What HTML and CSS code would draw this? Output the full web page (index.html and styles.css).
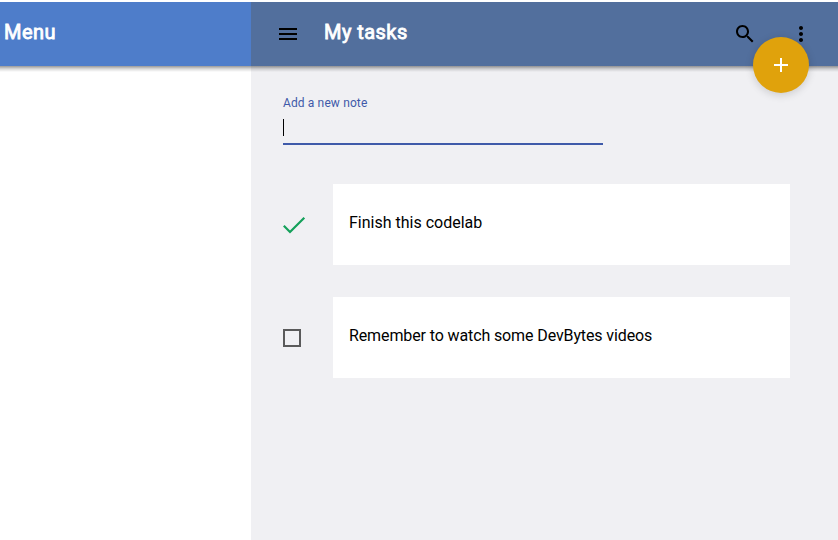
FILE: index.html
```html
<!DOCTYPE html>
<html lang="en">
<head>
<meta charset="utf-8">
<title>My tasks</title>
<link rel="stylesheet" href="styles.css">
</head>
<body>
<div class="app">
  <aside class="drawer">
    <header class="bar bar-drawer"><h1 class="title">Menu</h1></header>
  </aside>
  <main class="main">
    <header class="bar bar-main">
      <svg class="icon" viewBox="0 0 24 24"><path d="M3 18h18v-2H3v2zm0-5h18v-2H3v2zm0-7v2h18V6H3z"/></svg>
      <h1 class="title title-main">My tasks</h1>
      <svg class="icon" viewBox="0 0 24 24"><path d="M15.5 14h-.79l-.28-.27C15.41 12.59 16 11.11 16 9.5 16 5.91 13.09 3 9.5 3S3 5.91 3 9.5 5.91 16 9.5 16c1.61 0 3.09-.59 4.23-1.57l.27.28v.79l5 4.99L20.49 19l-4.99-5zm-6 0C7.01 14 5 11.99 5 9.5S7.01 5 9.5 5 14 7.01 14 9.5 11.99 14 9.5 14z"/></svg>
      <svg class="icon icon-more" viewBox="0 0 24 24"><path d="M12 8c1.100 0 2-.9 2-2s-.9-2-2-2-2 .9-2 2 .9 2 2 2zm0 2c-1.100 0-2 .9-2 2s.9 2 2 2 2-.9 2-2-.9-2-2-2zm0 6c-1.100 0-2 .9-2 2s.9 2 2 2 2-.9 2-2-.9-2-2-2z"/></svg>
      <button class="fab" aria-label="Add"><svg class="icon icon-add" viewBox="0 0 24 24"><path d="M19 13h-6v6h-2v-6H5v-2h6V5h2v6h6v2z"/></svg></button>
    </header>
    <section class="content">
      <div class="field">
        <div class="label">Add a new note</div>
        <div class="input"><span class="caret"></span></div>
      </div>
      <div class="task">
        <svg class="mark" viewBox="0 0 24 18"><path class="check" d="M.8 9.800 7 16 21.300 1.800"/></svg>
        <div class="card">Finish this codelab</div>
      </div>
      <div class="task">
        <span class="mark"><span class="box"></span></span>
        <div class="card card-long">Remember to watch some DevBytes videos</div>
      </div>
    </section>
  </main>
</div>
</body>
</html>
```
FILE: styles.css
```css
* { box-sizing: border-box; }
body {
  margin: 0;
  background: #fff;
  color: #000;
  font-family: Roboto, sans-serif;
}
.app {
  display: flex;
  height: 540px;
  padding-top: 2px;
  overflow: hidden;
}
.drawer { width: 251px; background: #fff; }
.main { flex: 1; background: #f0f0f3; }
.bar {
  position: relative;
  display: flex;
  align-items: center;
  height: 64px;
}
.bar::after {
  content: "";
  position: absolute;
  top: 100%;
  left: 0;
  right: 0;
  height: 6px;
  background: linear-gradient(rgba(0, 0, 0, .4), rgba(0, 0, 0, .14) 50%, rgba(0, 0, 0, 0));
}
.bar-drawer { background: #4e7dca; padding-left: 4px; }
.bar-main { background: #526f9d; padding: 0 25px; }
.title {
  margin: 0 0 4px;
  color: #fff;
  font-size: 20px;
  font-weight: 400;
  letter-spacing: .45px;
  line-height: 24px;
  -webkit-text-stroke: .8px #fff;
}
.title-main { margin-left: 24px; margin-right: auto; }
.icon { width: 24px; height: 24px; flex: none; }
.icon-more { margin-left: 32px; }
.fab {
  position: absolute;
  z-index: 1;
  right: 29px;
  top: 35px;
  display: flex;
  align-items: center;
  justify-content: center;
  width: 56px;
  height: 56px;
  padding: 0;
  border: 0;
  border-radius: 50%;
  background: #e0a20c;
  box-shadow: 0 2px 8px rgba(0, 0, 0, .16);
}
.icon-add { fill: #fff; }
.content { padding: 28px 48px 0 32px; }
.field { width: 320px; margin-bottom: 39px; }
.label { color: #3f5aa9; font-size: 12px; letter-spacing: .13px; line-height: 18px; }
.input {
  height: 33px;
  padding-top: 7px;
  border-bottom: 2px solid #3f5aa9;
}
.caret { display: block; width: 1px; height: 17px; background: #000; }
.task { display: flex; align-items: center; margin-bottom: 32px; }
.mark { width: 24px; height: 18px; margin-right: 26px; }
.check { fill: none; stroke: #14a05a; stroke-width: 2.200; }
.box { display: block; width: 18px; height: 18px; border: 2px solid #5a5a5a; }
.card {
  flex: 1;
  height: 81px;
  padding: 28px 16px;
  background: #fff;
  font-size: 16px;
  line-height: 22px;
}
.card-long { letter-spacing: -.115px; }
```
